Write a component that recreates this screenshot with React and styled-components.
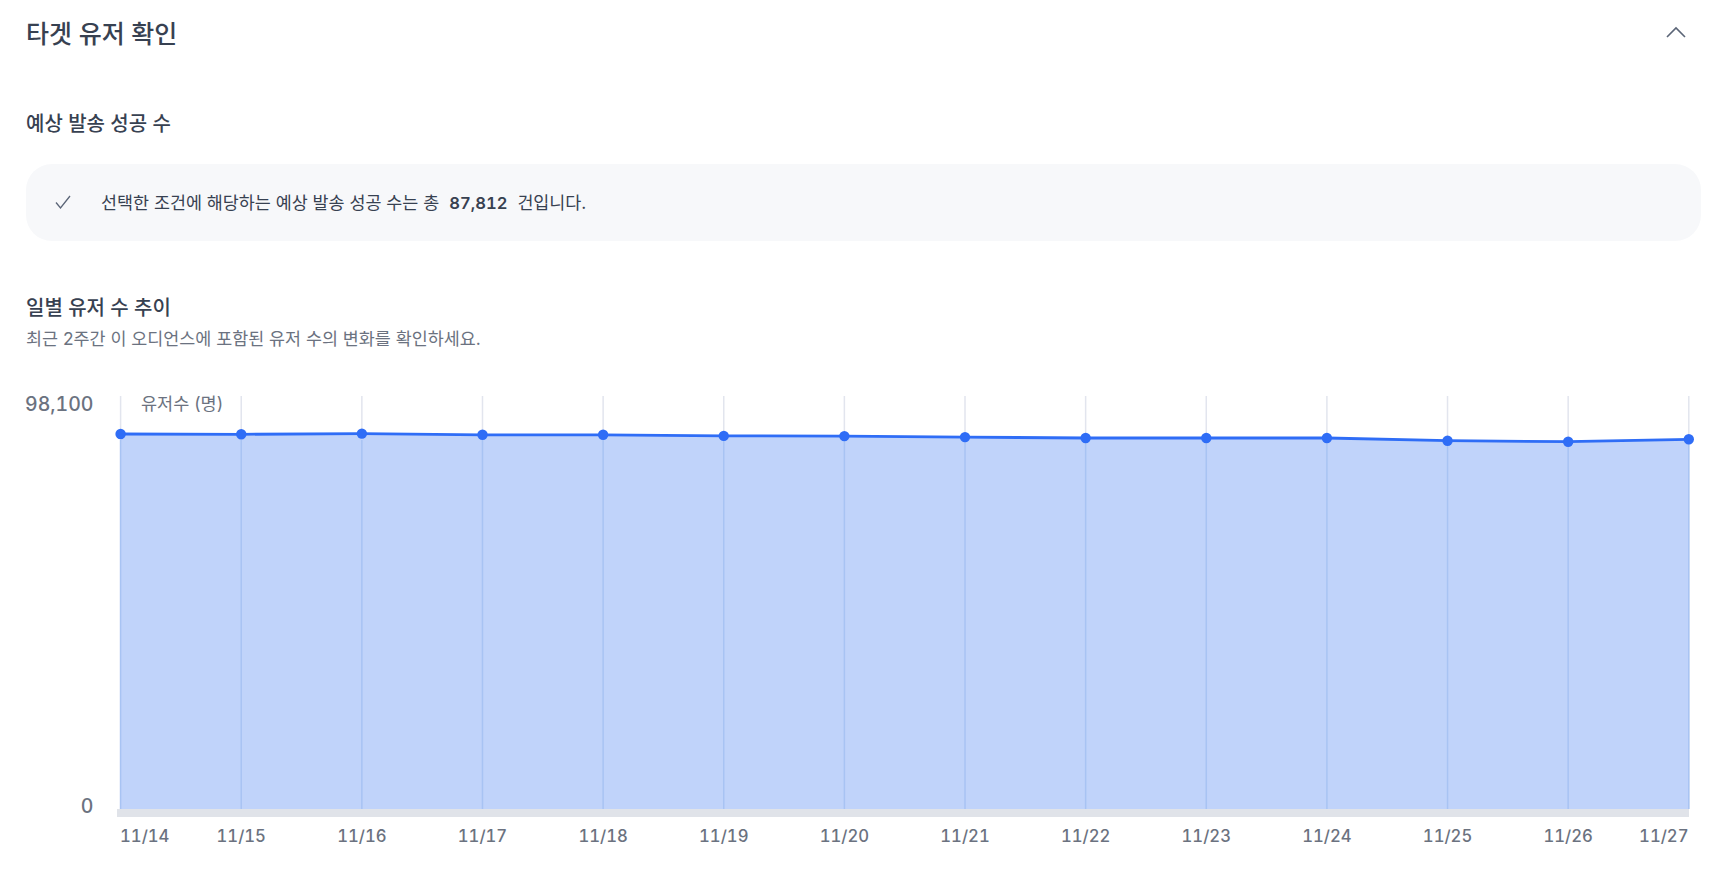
import React from 'react';
import styled, { createGlobalStyle } from 'styled-components';

const Global = createGlobalStyle`
  html, body { margin: 0; padding: 0; background: #fff; }
  body { font-family: Inter, "Noto Sans CJK KR", "Noto Sans", sans-serif; }
`;
const KR = `Inter, "Noto Sans CJK KR", sans-serif`;

const Page = styled.main`
  width: 1718px; height: 890px; box-sizing: border-box; overflow: hidden;
  padding: 0 17px 0 26px; display: flex; flex-direction: column;
`;
const Header = styled.header`
  height: 66px; display: flex; align-items: center; justify-content: space-between;
`;
const Title = styled.h1`
  margin: 2px 0 0; font: 500 25px/34px ${KR}; color: #374151;
`;
const Toggle = styled.button`
  border: 0; background: none; padding: 0 0 2px; width: 24px; height: 24px; margin-right: 13px;
  display: flex; align-items: center; justify-content: center; color: #5b6577;
`;
const SectionTitle = styled.h2`
  margin: 0; font: 500 20px/26px ${KR}; color: #374151;
`;
const Section = styled.section`
  display: flex; flex-direction: column;
  margin-top: ${p => p.$top}px;
`;
const Notice = styled.div`
  margin-top: 27px; height: 77px; border-radius: 26px; background: #f7f8fa;
  display: flex; align-items: center; padding-left: 28px; color: #374151;
  font: 400 17.4px/24px ${KR};
`;
const CheckIcon = styled.svg`
  width: 18px; height: 18px; flex: none; margin-right: 29px; margin-top: -2px; color: #5b6577;
`;
const Strong = styled.strong`
  font-weight: 600; margin: 0 10px 0 10px; font-size: 16.6px; font-variant-numeric: tabular-nums;
`;
const Sub = styled.p`
  margin: 6px 0 0; font: 400 17.4px/24px ${KR}; color: #6b7280;
`;
const ChartSvg = styled.svg`
  display: block; margin-top: 45px; flex: none; overflow: visible;
`;
const AxisText = styled.text`
  font: 500 19.5px Inter, sans-serif; fill: #6b7280; font-variant-numeric: tabular-nums;
`;
const UnitText = styled.text`
  font: 400 17.5px ${KR}; fill: #6b7280;
`;
const DateText = styled.text`
  font: 500 16.7px Inter, sans-serif; fill: #6b7280; font-variant-numeric: tabular-nums;
`;

const OX = 26, OY = 396;
const days = ['11/14','11/15','11/16','11/17','11/18','11/19','11/20','11/21','11/22','11/23','11/24','11/25','11/26','11/27'];
const ys = [434,434.3,433.6,434.8,434.8,435.9,436.1,437.1,438,438,438,440.7,441.7,439.3];
const xs = days.map((_, i) => 120.6 + i * 120.63);
const line = xs.map((x, i) => `${x},${ys[i]}`).join(' ');
const area = `120.6,809 ${line} ${xs[13]},809`;

function Chart() {
  return (
    <ChartSvg width="1675" height="450" viewBox={`${OX} ${OY} 1675 450`}>
      {xs.map(x => <line key={x} x1={x} x2={x} y1="396" y2="809" stroke="#e2e5ee" strokeWidth="1.5" />)}
      <polygon points={area} fill="#c0d3fa" />
      {xs.map(x => <line key={x} x1={x} x2={x} y1={440} y2="809" stroke="#a8c3f3" strokeWidth="1.5" />)}
      <rect x="117" y="809" width="1572" height="8" fill="#e0e3e9" />
      <polyline points={line} fill="none" stroke="#2f6df6" strokeWidth="2.8" />
      {xs.map((x, i) => <circle key={x} cx={x} cy={ys[i]} r="5.2" fill="#2f6df6" />)}
      <AxisText x="93.5" y="411" textAnchor="end">98,100</AxisText>
      <AxisText x="93.5" y="813" textAnchor="end">0</AxisText>
      <UnitText x="141" y="410">유저수 (명)</UnitText>
      {days.map((d, i) => (
        <DateText key={d} x={i === 0 ? 120 : i === 13 ? 1688.5 : xs[i]} y="842"
          textAnchor={i === 0 ? 'start' : i === 13 ? 'end' : 'middle'}>{d}</DateText>
      ))}
    </ChartSvg>
  );
}

export default function App() {
  return (
    <Page>
      <Global />
      <Header>
        <Title>타겟 유저 확인</Title>
        <Toggle aria-label="접기">
          <svg width="20" height="12" viewBox="0 0 20 12" fill="none" stroke="currentColor" strokeWidth="1.6">
            <path d="M1 11 L10 2 L19 11" />
          </svg>
        </Toggle>
      </Header>
      <Section $top={45}>
        <SectionTitle>예상 발송 성공 수</SectionTitle>
        <Notice>
          <CheckIcon viewBox="0 0 18 18" fill="none" stroke="currentColor" strokeWidth="1.3">
            <path d="M2 9.5 L6.5 15 L16 3" />
          </CheckIcon>
          <span>선택한 조건에 해당하는 예상 발송 성공 수는 총<Strong>87,812</Strong>건입니다.</span>
        </Notice>
      </Section>
      <Section $top={54}>
        <SectionTitle>일별 유저 수 추이</SectionTitle>
        <Sub>최근 2주간 이 오디언스에 포함된 유저 수의 변화를 확인하세요.</Sub>
        <Chart />
      </Section>
    </Page>
  );
}
